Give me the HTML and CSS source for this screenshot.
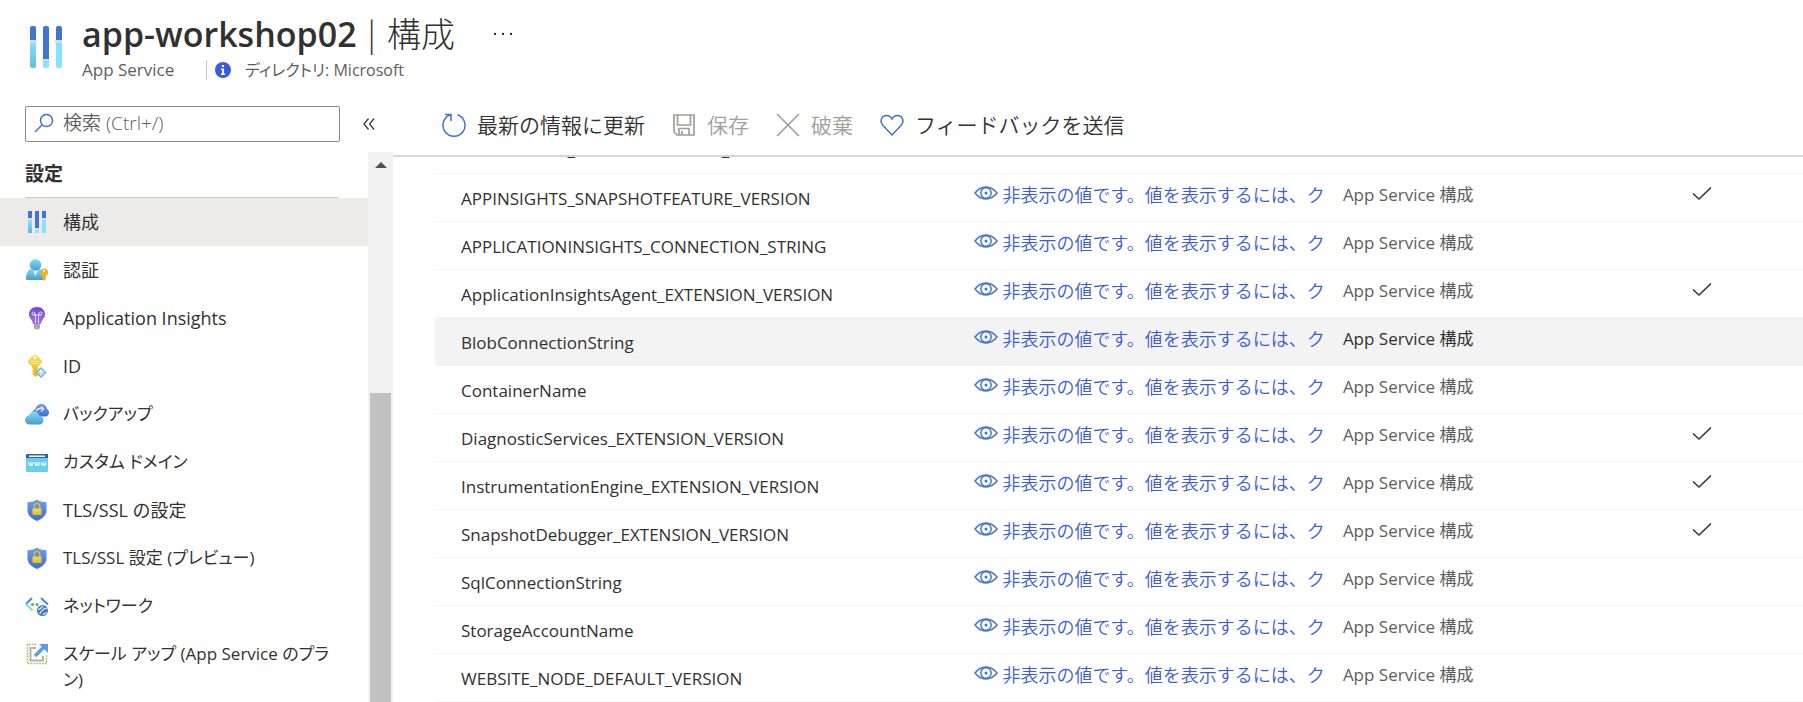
FILE: index.html
```html
<!DOCTYPE html>
<html lang="ja">
<head>
<meta charset="utf-8">
<title>app-workshop02 | 構成</title>
<link rel="stylesheet" href="styles.css">
</head>
<body>
<svg class="defs" aria-hidden="true">
  <defs>
    <linearGradient id="cyan" x1="0" y1="0" x2="0" y2="1"><stop offset="0" stop-color="#7fdcf5"/><stop offset="1" stop-color="#4a9cc8"/></linearGradient>
    <linearGradient id="blue" x1="0" y1="0" x2="0" y2="1"><stop offset="0" stop-color="#6aa0f0"/><stop offset="1" stop-color="#3f6fd0"/></linearGradient>
    <linearGradient id="violet" x1="0" y1="0" x2="0" y2="1"><stop offset="0" stop-color="#6a48cc"/><stop offset="1" stop-color="#a873ee"/></linearGradient>
    <linearGradient id="gold" x1="0" y1="0" x2="0" y2="1"><stop offset="0" stop-color="#f8dc50"/><stop offset="1" stop-color="#ecb820"/></linearGradient>
    <linearGradient id="lake" x1="0" y1="0" x2="0" y2="1"><stop offset="0" stop-color="#84e4fc"/><stop offset="1" stop-color="#68b8dc"/></linearGradient>
    <symbol id="eye" viewBox="0 0 24 14"><path d="M1 7C4.500 2.600 8 1 12 1s7.500 1.600 11 6c-3.500 4.400-7 6-11 6S4.500 11.400 1 7z" fill="none" stroke="currentColor" stroke-width="1.400"/><circle cx="12" cy="7" r="5.200" fill="none" stroke="currentColor" stroke-width="1.400"/><circle cx="12" cy="7" r="1.500" fill="currentColor"/></symbol>
    <symbol id="check" viewBox="0 0 22 14"><path d="M2 7.500 8 13 20 1.500" fill="none" stroke="currentColor" stroke-width="1.500"/></symbol>
    <symbol id="sliders" viewBox="0 0 32 42">
      <path d="M0 16h6v24a2 2 0 0 1-2 2H2a2 2 0 0 1-2-2z" fill="url(#lake)"/><path d="M13 35h6v5a2 2 0 0 1-2 2h-2a2 2 0 0 1-2-2z" fill="#84e4fc"/><path d="M26 16h6v24a2 2 0 0 1-2 2h-2a2 2 0 0 1-2-2z" fill="#84e4fc"/>
      <path d="M0 14V2a2 2 0 0 1 2-2h2a2 2 0 0 1 2 2v12zM13 33V2a2 2 0 0 1 2-2h2a2 2 0 0 1 2 2v31zM26 14V2a2 2 0 0 1 2-2h2a2 2 0 0 1 2 2v12z" fill="#4275d2"/>
      <path d="M-1 14h8v3h-8zM12 33h8v2h-8zM25 14h8v3h-8z" fill="#dcdce0"/>
    </symbol>
    <symbol id="sliders-small" viewBox="0 0 24 24">
      <path d="M3 10h4v13H3z" fill="url(#lake)"/><path d="M10 20h4v3h-4zM17 10h4v13h-4z" fill="#84e4fc"/>
      <path d="M3 1h4v7H3zM10 1h4v17h-4zM17 1h4v7h-4z" fill="#4275d2"/>
      <path d="M3 8h4v2H3zM10 18h4v2h-4zM17 8h4v2h-4z" fill="#dcdce0"/>
    </symbol>
    <symbol id="shield" viewBox="0 0 24 24"><path d="M12 1.500c2.500 2 5.500 2.500 9.500 2.800v8.200c0 5.500-5 8.500-9.500 10.500-4.500-2-9.500-5-9.500-10.500V4.300c4-.3 7-.8 9.500-2.800z" fill="url(#blue)"/><path d="M9.200 11V8.300a2.800 2.800 0 0 1 5.600 0V11" fill="none" stroke="#e8b828" stroke-width="1.500"/><rect x="7.500" y="10.500" width="9" height="6.500" rx="1" fill="url(#gold)"/></symbol>
  </defs>
</svg>

<header class="header">
  <svg class="header-icon" viewBox="-1 0 34 42"><use href="#sliders" width="32" height="42"/></svg>
  <div class="heading">
    <div class="title-row">
      <h1 class="title"><span>app-workshop02</span><span class="light">|</span><span class="light">構成</span></h1>
      <button class="more" aria-label="その他"><svg viewBox="0 0 18 4"><path d="M0 1h2v2H0zM8 1h2v2H8zM16 1h2v2h-2z" fill="#323130"/></svg></button>
    </div>
    <div class="subtitle">
      <span class="kind">App Service</span>
      <svg class="info" viewBox="0 0 16 16"><circle cx="8" cy="8" r="8" fill="#3b5bdb"/><path d="M7 3h2v2H7zM6 6.500h3v5h1V13H6v-1.500h1V8H6z" fill="#fff"/></svg>
      <span class="directory">ディレクトリ: Microsoft</span>
    </div>
  </div>
</header>

<div class="body">
  <aside class="sidebar">
    <div class="search-row">
      <label class="search"><svg viewBox="0 0 20 20"><circle cx="12.500" cy="7.500" r="6" fill="none" stroke="#3c72cc" stroke-width="1.500"/><path d="M8 12 1 19" stroke="#3c72cc" stroke-width="1.500"/></svg><input type="text" placeholder="検索 (Ctrl+/)" aria-label="検索"></label>
      <button class="collapse" aria-label="折りたたむ"><svg viewBox="0 0 12 12"><path d="M5.500.5 1 6l4.500 5.500M11 .5 6.500 6l4.500 5.500" fill="none" stroke="#323130" stroke-width="1.200"/></svg></button>
    </div>
    <div class="menu-area">
      <nav class="menu">
        <h2 class="menu-title">設定</h2>
        <a class="item selected" href="#"><svg viewBox="0 0 24 24"><use href="#sliders-small"/></svg><span>構成</span></a>
        <a class="item" href="#"><svg viewBox="0 0 24 24"><path d="M1 21c0-6 2-10 6-10h7c4 0 5 4 5 8v3H3c-1.300 0-2-.3-2-1z" fill="url(#cyan)"/><path d="m7.500 11 3 7 3-7z" fill="#e8f4fa"/><circle cx="10.500" cy="7" r="5.800" fill="url(#cyan)"/><path d="M19 10.500a3.800 3.800 0 0 0-1.500 7.200V21l1.500 2 2-2v-3.300A3.800 3.800 0 0 0 19 10.500z" fill="#f0b428"/><circle cx="19" cy="12.700" r="1" fill="#fff"/></svg><span>認証</span></a>
        <a class="item" href="#"><svg viewBox="0 0 24 24"><path d="M9 17h6v5l-1.500 1.500h-3L9 22z" fill="#aaa"/><path d="M12 1c5 0 8 3.300 8 7.500 0 4-3.500 5-4 9.500H8c-.5-4.500-4-5.500-4-9.500C4 4.300 7 1 12 1z" fill="url(#violet)"/><path d="M10.500 17V7.500M13.500 17V7.500M8 9h8" stroke="#e6d8ff" stroke-width="1"/><circle cx="8.500" cy="7.500" r="1.500" fill="none" stroke="#e6d8ff"/><circle cx="15.500" cy="7.500" r="1.500" fill="none" stroke="#e6d8ff"/></svg><span>Application Insights</span></a>
        <a class="item" href="#"><svg viewBox="0 0 24 24"><path d="M10 .5c1 0 7 5.500 7 7s-2 3.500-4 4.500v9L10.500 23 7 20l1.500-1.500L7 17l1.500-1.500L7 14v-2c-2-1-4-3-4-4.500S9 .5 10 .5z" fill="url(#gold)"/><circle cx="10" cy="3.500" r="1.500" fill="#fff"/><path d="M5.500 7.500h9M6.500 9.500h7" stroke="#fff3b0" stroke-width="1"/><path d="m16 13.500 5 5-5 5-5-5z" fill="#9cd4ec" stroke="#5b9cc4" stroke-width="1"/><path d="M16 16v5M14 18.500l2-2 2 2" stroke="#fff" fill="none"/></svg><span>ID</span></a>
        <a class="item" href="#"><svg viewBox="0 0 24 24"><path d="M8 14c-2-3 0-6 2-6.500C11 4 13.500 2 16.500 2c3 0 5 2 5.500 5 1.500.5 2 2 2 3.500 0 2-1.500 4-3.500 4z" fill="url(#blue)"/><path d="M11.500 9c1-2.500 4-3 6.500-2.500M16 4.500 18.500 7 16 9.500" fill="none" stroke="#e4ecff" stroke-width="1.500"/><path d="M5 22.500c-3 0-5-1.800-5-4.500s2-4.500 4-4.500C5 11 7 9.500 9.500 9.500s4 1.500 4.500 4c2.500 0 4.500 2 4.500 4.500s-2 4.500-4 4.500z" fill="url(#cyan)"/></svg><span class="kana">バックアップ</span></a>
        <a class="item" href="#"><svg viewBox="0 0 24 24"><path d="M1 4h22v17a1 1 0 0 1-1 1H2a1 1 0 0 1-1-1z" fill="#68cdee"/><path d="M1 8V5a1 1 0 0 1 1-1h20a1 1 0 0 1 1 1v3z" fill="#2f5fb4"/><rect x="4" y="5.500" width="16" height="1.500" fill="#fff"/><path d="m3.500 12 1.200 4 1.200-3.500L7 16l1.300-4m1.500 0 1.200 4 1.200-3.500 1.200 3.500 1.200-4m1.500 0 1.200 4 1.200-3.500 1.200 3.500 1.200-4" fill="none" stroke="#fff"/></svg><span class="kana">カスタム ドメイン</span></a>
        <a class="item" href="#"><svg viewBox="0 0 24 24"><use href="#shield"/></svg><span>TLS/SSL の設定</span></a>
        <a class="item" href="#"><svg viewBox="0 0 24 24"><use href="#shield"/></svg><span class="kana">TLS/SSL 設定 (プレビュー)</span></a>
        <a class="item" href="#"><svg viewBox="0 0 24 24"><path d="M7 4 1 10" stroke="#4688dc" stroke-width="2"/><path d="m1 10 6.500 6.500" stroke="#74dcf8" stroke-width="2"/><path d="m16 4 7 6.500" stroke="#4688dc" stroke-width="2"/><circle cx="7.500" cy="10.500" r="1.500" fill="#6cb33c"/><circle cx="12" cy="10.500" r="1.500" fill="#6cb33c"/><circle cx="17.500" cy="16.500" r="5.500" fill="#4277cc"/><path d="M13 15c2 1 3-1 5-3M15 20c0-3 2-2 3-4s3-1 4.500-2M18.500 21c0-2 2-2 4-2" stroke="#c4dcf4" stroke-width="1.500" fill="none"/></svg><span class="kana">ネットワーク</span></a>
        <a class="item" href="#"><svg viewBox="0 0 24 24"><path d="M11 2.500H2.500v19h19V12" fill="none" stroke="#90c94c" stroke-width="1.600" stroke-dasharray="1.600 1.200"/><path d="M11 6H5.500v12.500H18V14" fill="none" stroke="#b4b4b4" stroke-width="2"/><path d="m10 14 9-9" stroke="#5c9ce8" stroke-width="3.500"/><path d="M14 2h9v9z" fill="#5c9ce8"/></svg><span class="kana">スケール アップ (App Service のプラ<br>ン)</span></a>
      </nav>
      <div class="scrollbar"><div class="scroll-up"></div><div class="thumb"></div></div>
    </div>
  </aside>

  <main class="main">
    <div class="toolbar">
      <button class="tool"><svg viewBox="0 0 24 24"><path d="M8.500 1.800A11 11 0 1 0 15.500 1.800" fill="none" stroke="#3c72cc" stroke-width="1.500"/><path d="M3 1.500h6V8" fill="none" stroke="#3c72cc" stroke-width="1.500"/></svg>最新の情報に更新</button>
      <button class="tool" disabled><svg viewBox="0 0 24 24"><path d="M2 2h20v20H5l-3-3zM5.500 2v10h13V2M7 22v-6.500h10V22M10 18v4" fill="none" stroke="#a19f9d" stroke-width="1.700"/></svg>保存</button>
      <button class="tool" disabled><svg viewBox="0 0 24 24"><path d="m1 1 22 22M23 1 1 23" fill="none" stroke="#a19f9d" stroke-width="1.700"/></svg>破棄</button>
      <button class="tool"><svg viewBox="0 0 24 24"><path d="M12 22 3 12.500C-1 8 2 2.500 6.500 2.500c3 0 4.500 1.500 5.500 3.500 1-2 2.500-3.500 5.500-3.500C22 2.500 25 8 21 12.500z" fill="none" stroke="#3c72cc" stroke-width="1.500"/></svg>フィードバックを送信</button>
    </div>
    <div class="table-area">
      <table class="settings">
        <colgroup><col class="c-name"><col class="c-value"><col class="c-source"><col></colgroup>
        <tbody id="rows"></tbody>
      </table>
    </div>
  </main>
</div>
<script src="app.js"></script>
</body>
</html>
```
FILE: styles.css
```css
* { box-sizing: border-box; }
body {
  margin: 0;
  height: 100vh;
  display: flex;
  flex-direction: column;
  overflow: hidden;
  background: #fff;
  color: #323130;
  font-family: "Open Sans", "Noto Sans CJK JP", sans-serif;
  font-size: 17px;
}
button { border: 0; background: none; padding: 0; font: inherit; color: inherit; }
a { color: inherit; text-decoration: none; }
svg { flex: none; display: block; }
.defs { position: absolute; width: 0; height: 0; }

.header { display: flex; gap: 19px; padding: 12px 28px 0 29px; height: 92px; }
.header-icon { width: 34px; height: 42px; margin-top: 14px; }
.title-row { display: flex; align-items: center; gap: 39px; height: 44px; }
.title { display: flex; gap: 6px; margin: 0; font-size: 34px; line-height: 44px; font-weight: 600; }
.light { font-weight: 300; }
.more svg { width: 18px; height: 4px; }
.subtitle { display: flex; align-items: center; height: 28px; color: #605e5c; line-height: 28px; }
.kind { width: 125px; border-right: 1px solid #c8c6c4; line-height: 20px; }
.info { width: 16px; height: 16px; margin: 0 14px 0 8px; }
.directory { font-size: 16px; font-feature-settings: "palt"; }

.body { flex: 1; min-height: 0; display: flex; }
.sidebar { width: 393px; flex: none; display: flex; flex-direction: column; }
.search-row { display: flex; align-items: center; gap: 23px; padding: 14px 18px 10px 25px; }
.search { display: flex; align-items: center; gap: 9px; flex: 1; height: 36px; padding: 0 8px 2px; border: 1px solid #8a8886; border-radius: 2px; }
.search svg { width: 20px; height: 20px; }
.search input { flex: 1; min-width: 0; border: 0; outline: 0; padding: 0; background: none; font: inherit; font-size: 19px; font-weight: 350; }
.search input::placeholder { color: #605e5c; opacity: 1; }
.collapse svg { width: 12px; height: 12px; }
.menu-area { flex: 1; min-height: 0; display: flex; }
.menu { flex: 1; overflow: hidden; font-size: 18px; }
.menu-title { margin: 0 30px 0 25px; height: 46px; line-height: 44px; font-size: 19px; font-weight: 600; border-bottom: 1px solid #c8c6c4; }
.item { display: flex; gap: 14px; padding: 11px 25px; line-height: 26px; white-space: nowrap; }
.item svg { width: 24px; height: 24px; margin-top: 1px; }
.kana { font-size: 17px; font-feature-settings: "palt"; }
.selected { background: #edebe9; }
.scrollbar { width: 25px; padding: 0 2px; background: #f1f1f1; display: flex; flex-direction: column; align-items: center; }
.scroll-up { margin: 10px 0 225px; border: 6px solid transparent; border-top: 0; border-bottom-color: #505050; }
.thumb { flex: 1; width: 100%; background: #c1c1c1; }

.main { flex: 1; min-width: 0; display: flex; flex-direction: column; }
.toolbar { display: flex; align-items: center; gap: 27px; height: 65px; padding: 2px 49px 0; border-bottom: 2px solid #d6d6d6; font-size: 21px; font-weight: 350; }
.tool { display: flex; align-items: center; gap: 11px; line-height: 30px; white-space: nowrap; }
.tool svg { width: 24px; height: 24px; }
.tool:disabled { color: #a19f9d; }
.table-area { flex: 1; min-height: 0; overflow: hidden; padding-left: 42px; }
.settings { width: 100%; margin-top: -32px; border-collapse: collapse; table-layout: fixed; }
.c-name { width: 39%; }
.c-value { width: 27%; }
.c-source { width: 25%; }
.settings td, .settings th { height: 48px; border-bottom: 1px solid #f3f3f3; text-align: left; vertical-align: top; font-weight: 400; line-height: 26px; white-space: nowrap; }
.settings th { padding: 12px 0 0 26px; }
.settings td { padding: 8px 0 0 5px; }
.settings tr.hover { background: #f3f3f3; }
.reveal { display: flex; gap: 5px; max-width: 352px; color: #3b5bdb; font-size: 18px; font-weight: 350; line-height: 26px; overflow: hidden; }
.reveal svg { width: 24px; height: 14px; margin-top: 4px; color: #3c72cc; }
.source { color: #605e5c; }
.hover .source { color: #323130; }
.check { width: 22px; height: 14px; margin: 4px 0 0 6px; }
```
FILE: app.js
```javascript
const settings = [
  ["APPINSIGHTS_PROFILERFEATURE_VERSION", false],
  ["APPINSIGHTS_SNAPSHOTFEATURE_VERSION", true],
  ["APPLICATIONINSIGHTS_CONNECTION_STRING", false],
  ["ApplicationInsightsAgent_EXTENSION_VERSION", true],
  ["BlobConnectionString", false, true],
  ["ContainerName", false],
  ["DiagnosticServices_EXTENSION_VERSION", true],
  ["InstrumentationEngine_EXTENSION_VERSION", true],
  ["SnapshotDebugger_EXTENSION_VERSION", true],
  ["SqlConnectionString", false],
  ["StorageAccountName", false],
  ["WEBSITE_NODE_DEFAULT_VERSION", false],
];
document.getElementById("rows").innerHTML = settings.map(([name, checked, hover]) => `
<tr${hover ? ' class="hover"' : ""}>
  <th scope="row">${name}</th>
  <td><button class="reveal"><svg><use href="#eye"/></svg>非表示の値です。値を表示するには、ク</button></td>
  <td class="source">App Service 構成</td>
  <td>${checked ? '<svg class="check"><use href="#check"/></svg>' : ""}</td>
</tr>`).join("");
```
